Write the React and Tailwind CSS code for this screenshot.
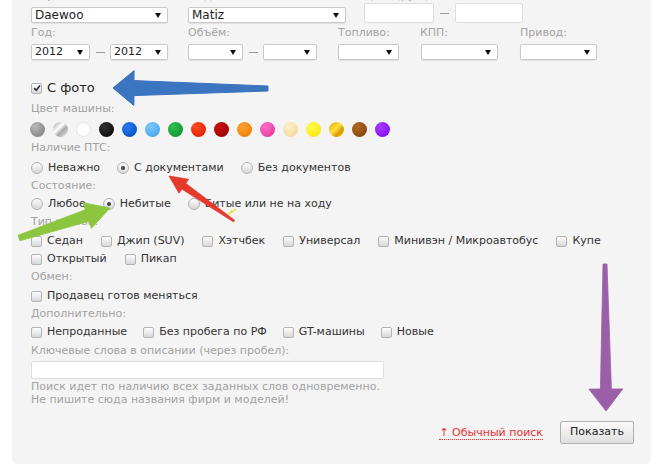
import React from 'react'

const font = { fontFamily: '"DejaVu Sans", Verdana, sans-serif' }

// Small black triangle that sits at the right end of a select
function Caret() {
  return (
    <svg width="6" height="5" viewBox="0 0 6 5" className="shrink-0">
      <path d="M0 0 L6 0 L3 5 Z" fill="#111" />
    </svg>
  )
}

function Select({ value = '', className = '' }) {
  return (
    <div
      className={`h-[16px] flex items-center justify-between bg-white border border-[#c9c9c9] rounded-[2px] shadow-[0_1px_1px_rgba(0,0,0,0.08)] pl-[3px] pr-[6px] text-[11px] text-[#222] ${className}`}
    >
      <span>{value}</span>
      <Caret />
    </div>
  )
}

function Input({ className = '' }) {
  return <div className={`bg-white border border-[#dedede] rounded-[2px] ${className}`} />
}

function Dash() {
  return <div className="w-[9px] h-[1px] bg-[#9a9a9a] mx-[6px] self-center" />
}

function Checkbox({ checked = false }) {
  return (
    <div className="w-[11px] h-[11px] shrink-0 rounded-[2px] border border-[#b3b3b3] bg-[linear-gradient(#fdfdfd,#d8d8d8)] flex items-center justify-center">
      {checked && (
        <svg width="8" height="8" viewBox="0 0 8 8">
          <path d="M1 4.2 L3.2 6.3 L7 1.5" fill="none" stroke="#333" strokeWidth="1.6" />
        </svg>
      )}
    </div>
  )
}

function Radio({ checked = false }) {
  return (
    <div className="w-[12px] h-[12px] shrink-0 rounded-full border border-[#b3b3b3] bg-[linear-gradient(#fdfdfd,#d6d6d6)] flex items-center justify-center">
      {checked && <div className="w-[4px] h-[4px] rounded-full bg-[#444]" />}
    </div>
  )
}

function Option({ kind, checked, label }) {
  return (
    <div className="flex items-center gap-[5px]">
      {kind === 'radio' ? <Radio checked={checked} /> : <Checkbox checked={checked} />}
      <span className="text-[11px] text-[#333] whitespace-nowrap">{label}</span>
    </div>
  )
}

function Label({ children, className = '' }) {
  return <div className={`flex items-center text-[11px] text-[#a3a3a3] ${className}`}>{children}</div>
}

const colors = [
  'bg-[radial-gradient(circle_at_35%_30%,#bbb,#777)]',
  'bg-[linear-gradient(135deg,#999,#fff_40%,#aaa_60%,#eee)]',
  'bg-white border border-[#e2e2e2]',
  'bg-[radial-gradient(circle_at_35%_30%,#333,#000)]',
  'bg-[radial-gradient(circle_at_35%_30%,#2a7cf0,#0048c0)]',
  'bg-[radial-gradient(circle_at_35%_30%,#7fc8ff,#3d9de8)]',
  'bg-[radial-gradient(circle_at_35%_30%,#30c050,#0a8a2a)]',
  'bg-[radial-gradient(circle_at_35%_30%,#ff4a20,#d81800)]',
  'bg-[radial-gradient(circle_at_35%_30%,#c81010,#960000)]',
  'bg-[radial-gradient(circle_at_35%_30%,#ffa030,#e57a00)]',
  'bg-[radial-gradient(circle_at_35%_30%,#ff70c8,#e02c96)]',
  'bg-[radial-gradient(circle_at_35%_30%,#fff0c8,#f0d490)]',
  'bg-[radial-gradient(circle_at_35%_30%,#fffa50,#f8e400)]',
  'bg-[linear-gradient(135deg,#e6a800,#ffe040_45%,#d99a00_70%,#ffd000)]',
  'bg-[radial-gradient(circle_at_35%_30%,#b06a20,#7a3e0a)]',
  'bg-[radial-gradient(circle_at_35%_30%,#a540ff,#7a00ee)]',
]

// Tapered arrow polygon from tail to tip
function arrowPoints(tail, tip, tailW, shaftW, headLen, headW) {
  const dx = tip[0] - tail[0]
  const dy = tip[1] - tail[1]
  const len = Math.hypot(dx, dy)
  const ux = dx / len
  const uy = dy / len
  const nx = -uy
  const ny = ux
  const bx = tip[0] - ux * headLen
  const by = tip[1] - uy * headLen
  const pts = [
    [tail[0] + (nx * tailW) / 2, tail[1] + (ny * tailW) / 2],
    [bx + (nx * shaftW) / 2, by + (ny * shaftW) / 2],
    [bx + (nx * headW) / 2, by + (ny * headW) / 2],
    tip,
    [bx - (nx * headW) / 2, by - (ny * headW) / 2],
    [bx - (nx * shaftW) / 2, by - (ny * shaftW) / 2],
    [tail[0] - (nx * tailW) / 2, tail[1] - (ny * tailW) / 2],
  ]
  return pts.map(p => `${p[0].toFixed(1)},${p[1].toFixed(1)}`).join(' ')
}

function Arrows() {
  return (
    <svg className="absolute inset-0 pointer-events-none" width="659" height="469" viewBox="0 0 659 469">
      <polygon points={arrowPoints([268, 88.5], [113, 88], 5, 15, 21, 35)} fill="#3b74bf" strokeLinejoin="round" stroke="#3b74bf" strokeWidth="1" />
      <polygon points={arrowPoints([234, 221], [169, 176], 2, 7, 18, 17)} fill="#e5392c" stroke="#e5392c" strokeWidth="0.8" strokeLinejoin="round" />
      <polygon points={arrowPoints([19, 238], [110, 208], 6, 12, 24, 27)} fill="#8cc63e" stroke="#8cc63e" strokeWidth="0.8" strokeLinejoin="round" />
      <polygon points={arrowPoints([605, 264], [606, 411], 4, 11, 22, 34)} fill="#9b5fa8" stroke="#9b5fa8" strokeWidth="0.8" strokeLinejoin="round" />
      <path d="M228 215 L232 210 L231 213 L236 209" fill="none" stroke="#f2df3a" strokeWidth="1.2" />
    </svg>
  )
}

export default function App() {
  return (
    <div className="relative w-[659px] h-[469px] bg-white overflow-hidden" style={font}>
      <div className="ml-[12px] w-[639px] -mt-[10px] bg-[#f4f4f4] rounded-b-[5px] shadow-[0_1px_1px_rgba(0,0,0,0.06)] pl-[19px] pr-[17px] pb-[19px] flex flex-col">
        {/* Марка / Модель / Цена labels (scrolled off) */}
        <div className="h-[13px] flex items-center">
          <Label className="w-[157px]">Марка:</Label>
          <Label className="w-[176px]">Модель:</Label>
          <Label>Цена (руб.):</Label>
        </div>
        <div className="h-[20px] flex items-end">
          <Select value="Daewoo" className="w-[137px] text-[12px]" />
          <div className="w-[20px]" />
          <Select value="Matiz" className="w-[158px] text-[12px]" />
          <div className="w-[18px]" />
          <div className="flex items-center">
            <Input className="w-[70px] h-[20px]" />
            <Dash />
            <Input className="w-[68px] h-[20px]" />
          </div>
        </div>

        <div className="h-[21px] flex items-center">
          <Label className="w-[157px]">Год:</Label>
          <Label className="w-[150px]">Объём:</Label>
          <Label className="w-[82px]">Топливо:</Label>
          <Label className="w-[100px]">КПП:</Label>
          <Label>Привод:</Label>
        </div>
        <div className="h-[16px] flex items-center">
          <Select value="2012" className="w-[59px]" />
          <div className="w-[20px] flex justify-center"><div className="w-[9px] h-[1px] bg-[#9a9a9a]" /></div>
          <Select value="2012" className="w-[58px]" />
          <div className="w-[20px]" />
          <Select className="w-[55px]" />
          <div className="w-[20px] flex justify-center"><div className="w-[9px] h-[1px] bg-[#9a9a9a]" /></div>
          <Select className="w-[54px]" />
          <div className="w-[21px]" />
          <Select className="w-[61px]" />
          <div className="w-[22px]" />
          <Select className="w-[77px]" />
          <div className="w-[22px]" />
          <Select className="w-[77px]" />
        </div>

        <div className="h-[19px]" />
        <div className="h-[18px] flex items-center gap-[5px]">
          <Checkbox checked />
          <span className="text-[13px] text-[#222]">С фото</span>
        </div>

        <Label className="h-[24px]">Цвет машины:</Label>
        <div className="h-[16px] flex items-center gap-[8px] -ml-[1px]">
          {colors.map((c, i) => (
            <div key={i} className={`w-[15px] h-[15px] rounded-full shrink-0 ${c}`} />
          ))}
        </div>

        <Label className="h-[22px]">Наличие ПТС:</Label>
        <div className="h-[18px] flex items-center gap-[17px]">
          <Option kind="radio" label="Неважно" />
          <Option kind="radio" checked label="С документами" />
          <Option kind="radio" label="Без документов" />
        </div>

        <Label className="h-[18px]">Состояние:</Label>
        <div className="h-[18px] flex items-center gap-[17px]">
          <Option kind="radio" label="Любое" />
          <Option kind="radio" checked label="Небитые" />
          <Option kind="radio" label="Битые или не на ходу" />
        </div>

        <Label className="h-[19px]">Тип кузова:</Label>
        <div className="h-[18px] flex items-center gap-[18px]">
          <Option label="Седан" />
          <Option label="Джип (SUV)" />
          <Option label="Хэтчбек" />
          <Option label="Универсал" />
          <Option label="Минивэн / Микроавтобус" />
          <Option label="Купе" />
        </div>
        <div className="h-[18px] flex items-center gap-[18px]">
          <Option label="Открытый" />
          <Option label="Пикап" />
        </div>

        <Label className="h-[19px]">Обмен:</Label>
        <div className="h-[18px] flex items-center">
          <Option label="Продавец готов меняться" />
        </div>

        <Label className="h-[18px]">Дополнительно:</Label>
        <div className="h-[18px] flex items-center gap-[16px]">
          <Option label="Непроданные" />
          <Option label="Без пробега по РФ" />
          <Option label="GT-машины" />
          <Option label="Новые" />
        </div>

        <Label className="h-[20px]">Ключевые слова в описании (через пробел):</Label>
        <Input className="w-[353px] h-[18px]" />
        <div className="text-[11px] leading-[13px] text-[#a3a3a3] pt-[1px]">
          Поиск идет по наличию всех заданных слов одновременно.
          <br />
          Не пишите сюда названия фирм и моделей!
        </div>

        <div className="h-[15px]" />
        <div className="h-[23px] flex items-center justify-end gap-[17px]">
          <span className="text-[11px] text-[#e8312e] border-b border-dotted border-[#e8312e] leading-[13px]">↑ Обычный поиск</span>
          <button className="w-[74px] h-[23px] border border-[#b0b0b0] rounded-[2px] bg-[linear-gradient(#fcfcfc,#dedede)] text-[11px] text-[#222]">
            Показать
          </button>
        </div>
      </div>
      <Arrows />
    </div>
  )
}
